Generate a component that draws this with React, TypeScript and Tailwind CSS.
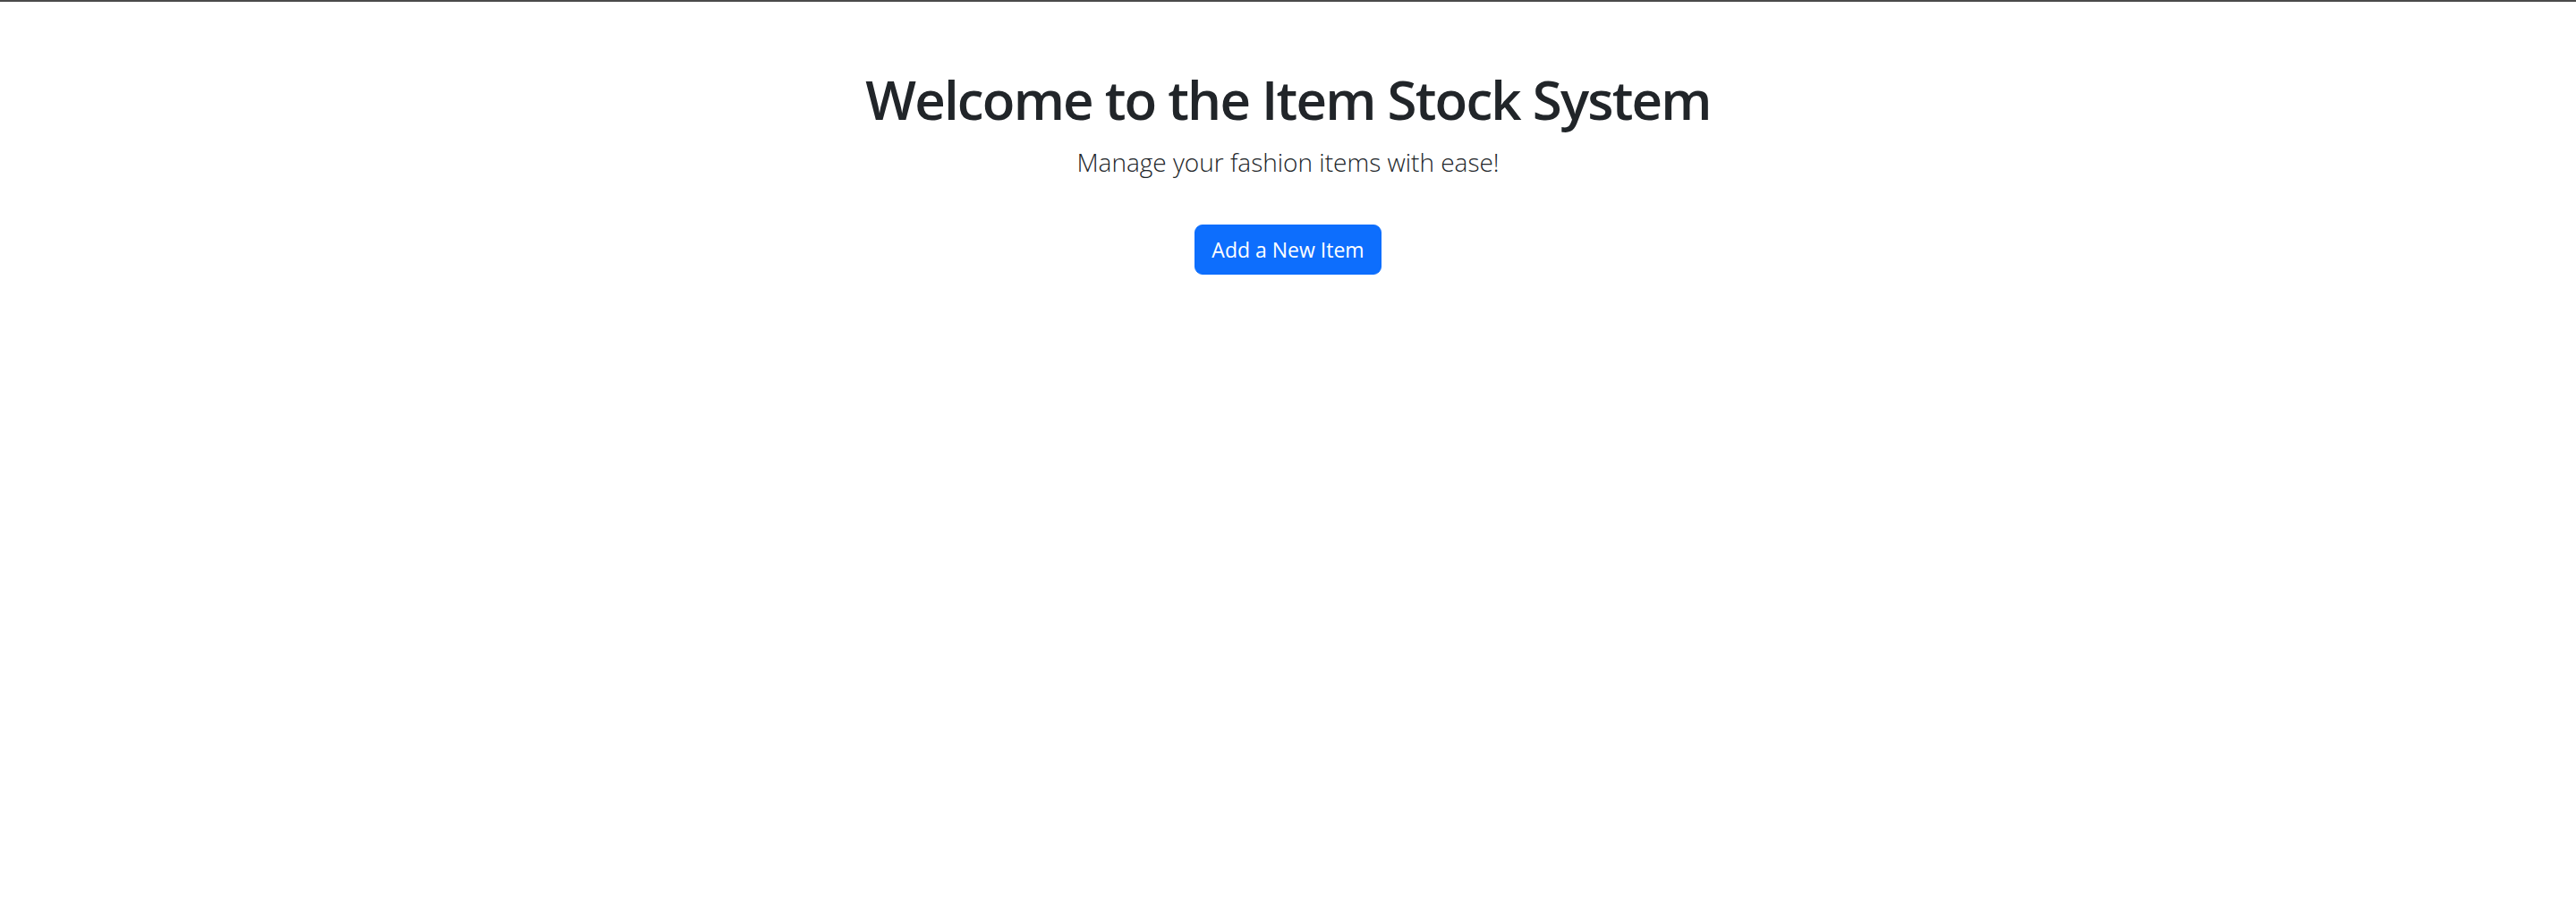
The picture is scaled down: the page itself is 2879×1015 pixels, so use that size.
import React from "react";

const App: React.FC = () => {
  return (
    <div
      className="min-h-screen bg-white border-t-2 border-[#4a4a4a] text-[#212529]"
      style={{ fontFamily: '"Open Sans", "Noto Sans", sans-serif' }}
    >
      <div className="flex flex-col items-center pt-[73px] text-center">
        <h1 className="text-[60px] font-semibold leading-[1.2] mb-[12px] tracking-[-1.8px]">
          Welcome to the Item Stock System
        </h1>
        <p className="text-[28px] font-light leading-[1.5] mt-[1px] mb-[24px]">
          Manage your fashion items with ease!
        </p>
        <button className="mt-[25px] bg-[#0d6efd] border border-[#0d6efd] text-white text-[23px] leading-[36px] px-[18px] py-[9px] rounded-[9px]">
          Add a New Item
        </button>
      </div>
    </div>
  );
};

export default App;
